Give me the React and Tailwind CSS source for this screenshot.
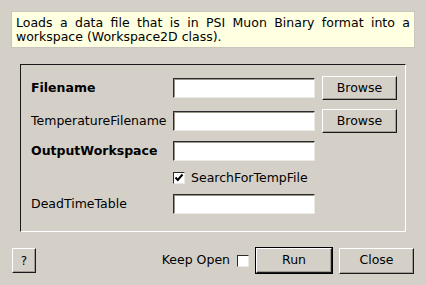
import React from "react";

const raised =
  "border border-t-white border-l-white border-b-[#1a1a1a] border-r-[#1a1a1a] shadow-[inset_-1px_-1px_0_#a09c94] bg-[#d4d0c8]";

function Input() {
  return (
    <div className="w-[142px] h-[20px] bg-white border border-t-[#2a2a2a] border-l-[#2a2a2a] border-b-[#ebe9e4] border-r-[#ebe9e4] shadow-[inset_1px_1px_0_#9a968e]" />
  );
}

function Button({ children, className = "" }) {
  return (
    <div className={`${raised} flex items-center justify-center ${className}`}>
      {children}
    </div>
  );
}

function Check({ checked }) {
  return (
    <div className="w-[12px] h-[12px] bg-white border border-t-[#2a2a2a] border-l-[#2a2a2a] border-b-[#ebe9e4] border-r-[#ebe9e4] flex items-center justify-center">
      {checked && (
        <svg width="10" height="10" viewBox="0 0 10 10">
          <path d="M1.5 4.5 L3.8 7 L8.5 1.5" stroke="#000" strokeWidth="2" fill="none" />
        </svg>
      )}
    </div>
  );
}

export default function App() {
  return (
    <div
      className="w-[426px] h-[285px] bg-[#d4d0c8] text-black text-[12.5px] overflow-hidden pt-[11px]"
      style={{ fontFamily: '"DejaVu Sans", sans-serif' }}
    >
      <div className="ml-[11px] w-[404px] h-[37px] bg-[#ffffe1] border border-[#c9c6bf] pl-[4px] pr-[4px] pt-[4px] leading-[14px] text-justify">
        Loads a data file that is in PSI Muon Binary format into a workspace (Workspace2D class).
      </div>

      <div className="ml-[20px] mt-[16px] w-[386px] h-[168px] border border-t-[#1a1a1a] border-l-[#1a1a1a] border-b-white border-r-white pl-[10px] pt-[11px]">
        <div className="flex items-center h-[24px]">
          <div className="w-[142px] font-bold">Filename</div>
          <Input />
          <Button className="ml-[7px] w-[75px] h-[24px]">Browse</Button>
        </div>
        <div className="flex items-center h-[24px] mt-[9px]">
          <div className="w-[142px]">TemperatureFilename</div>
          <Input />
          <Button className="ml-[7px] w-[75px] h-[24px]">Browse</Button>
        </div>
        <div className="flex items-center h-[24px] mt-[6px]">
          <div className="w-[142px] font-bold">OutputWorkspace</div>
          <Input />
        </div>
        <div className="flex items-center h-[24px] mt-[3px]">
          <div className="w-[142px]" />
          <Check checked />
          <span className="ml-[6px]">SearchForTempFile</span>
        </div>
        <div className="flex items-center h-[24px] mt-[2px]">
          <div className="w-[142px]">DeadTimeTable</div>
          <Input />
        </div>
      </div>

      <div className="flex items-center h-[27px] mt-[15px] pl-[12px] pr-[12px]">
        <Button className="w-[24px] h-[25px] text-[12px]">?</Button>
        <div className="flex-1" />
        <span>Keep Open</span>
        <div className="ml-[7px]">
          <Check />
        </div>
        <div className="ml-[6px] w-[78px] h-[27px] border border-[#000]">
          <Button className="w-full h-full">Run</Button>
        </div>
        <Button className="ml-[6px] w-[75px] h-[26px]">Close</Button>
      </div>
    </div>
  );
}
